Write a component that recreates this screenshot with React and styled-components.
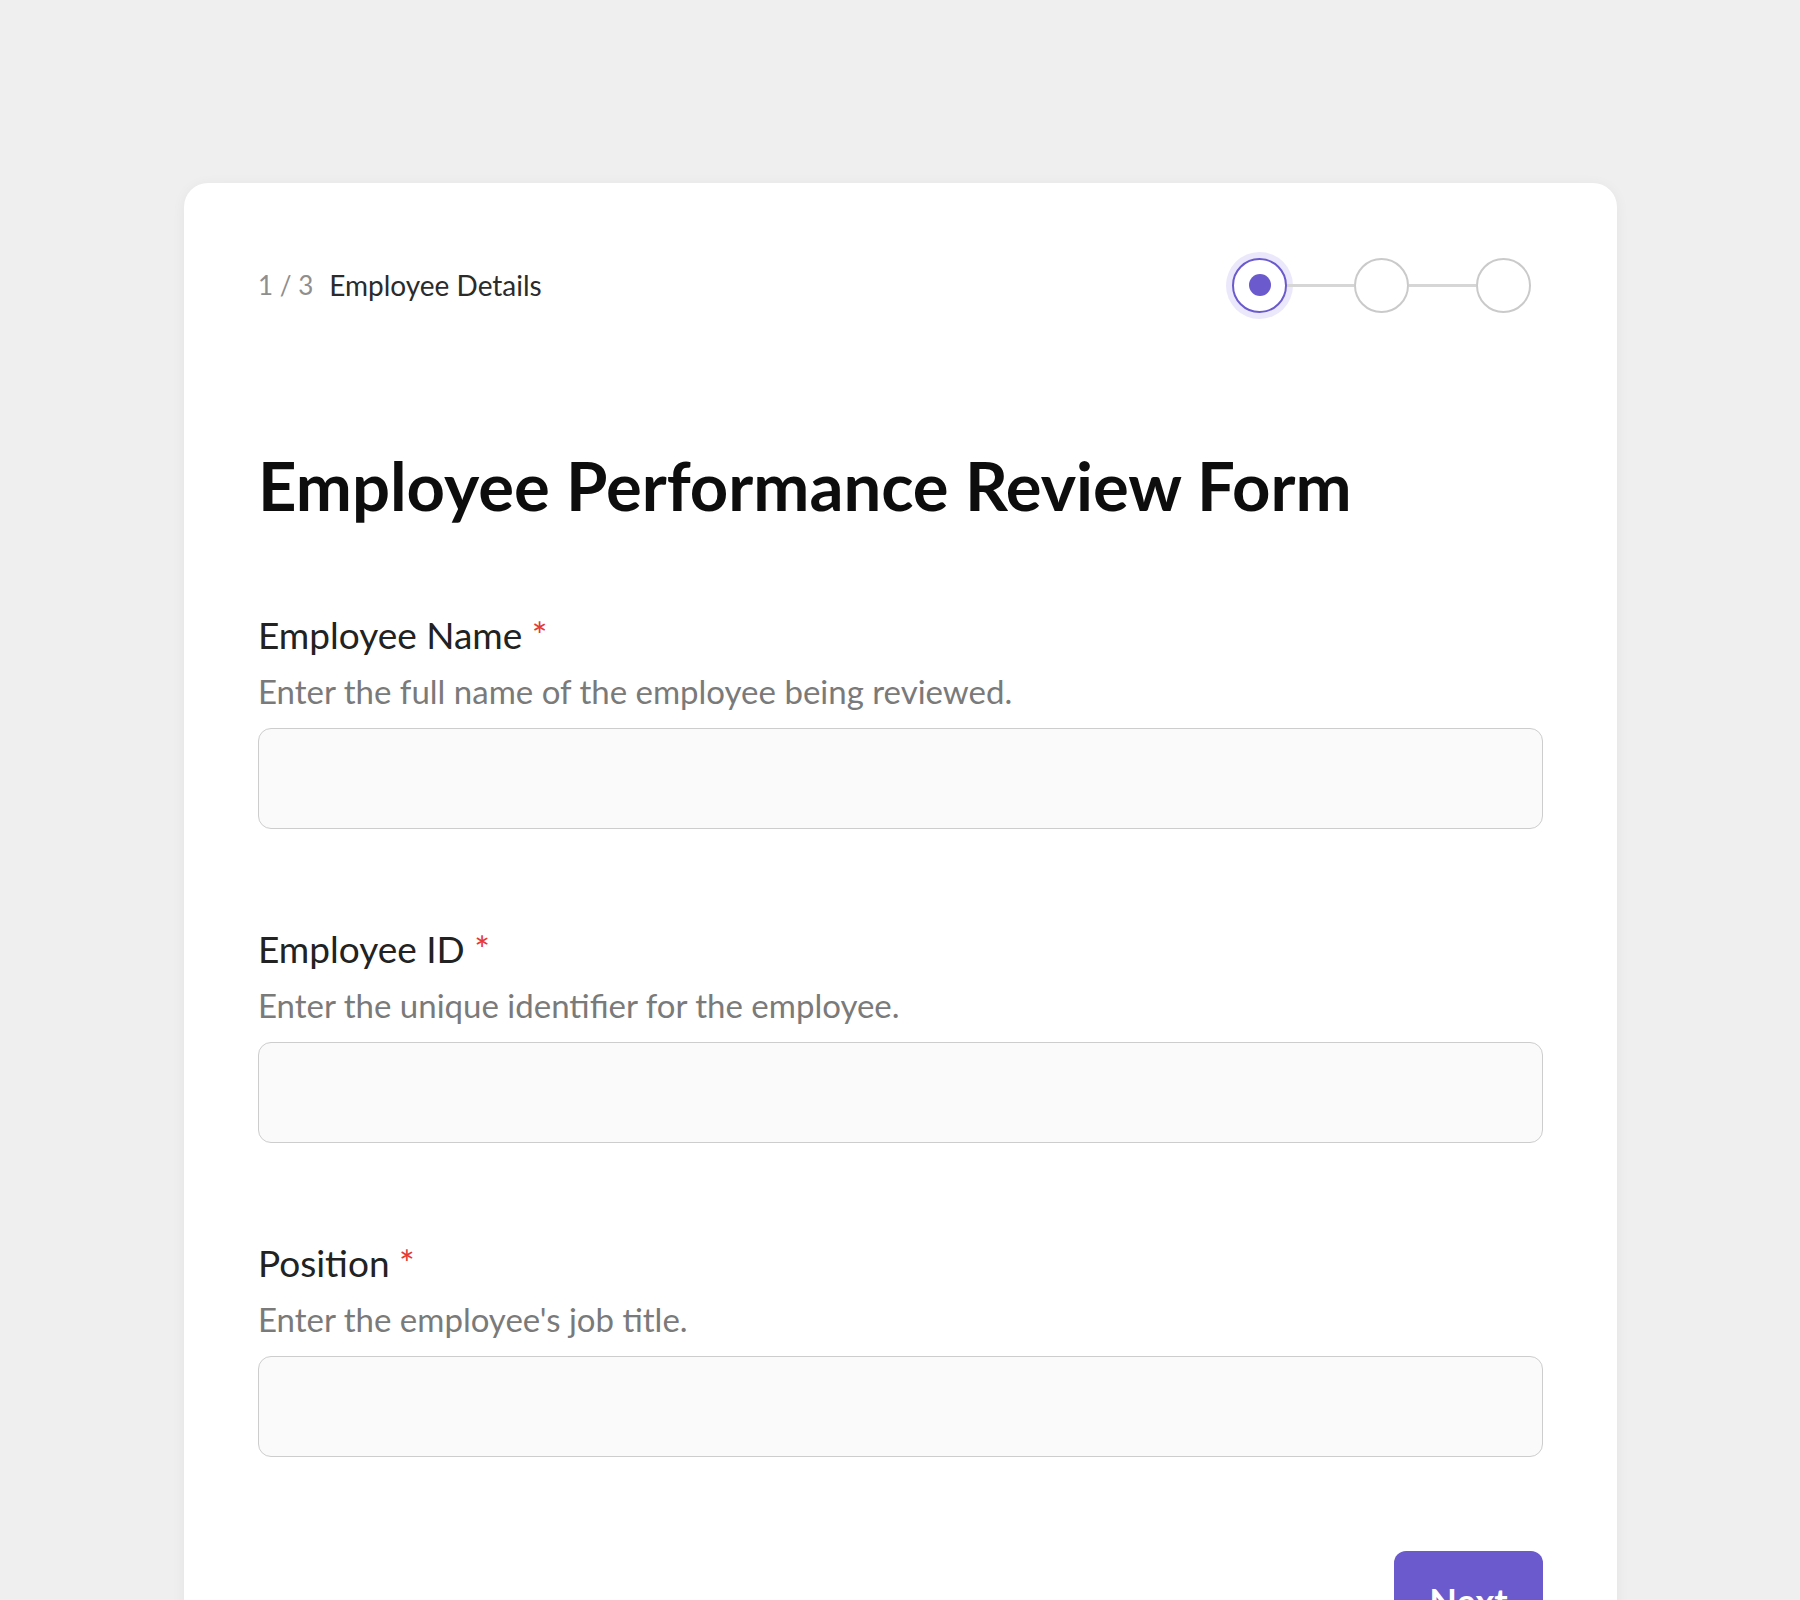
import styled, { createGlobalStyle } from 'styled-components';

const GlobalStyle = createGlobalStyle`
  body {
    margin: 0;
    background: #efefef;
    font-family: Lato, "Open Sans", sans-serif;
  }
`;

const fields = [
  { label: 'Employee Name', help: 'Enter the full name of the employee being reviewed.' },
  { label: 'Employee ID', help: 'Enter the unique identifier for the employee.' },
  { label: 'Position', help: "Enter the employee's job title." },
];

function Stepper({ current, total }) {
  const steps = [];
  for (let i = 0; i < total; i++) {
    if (i > 0) steps.push(<Connector key={'c' + i} $done={i <= current} />);
    steps.push(
      <StepDot key={'s' + i} $active={i === current}>
        {i === current && <InnerDot />}
      </StepDot>
    );
  }
  return <StepRow>{steps}</StepRow>;
}

function App() {
  return (
    <Page>
      <GlobalStyle />
      <Card>
        <Header>
          <StepText>
            <Counter>1 / 3</Counter>
            <StepName>Employee Details</StepName>
          </StepText>
          <Stepper current={0} total={3} />
        </Header>
        <Title>Employee Performance Review Form</Title>
        {fields.map((f) => (
          <Field key={f.label}>
            <Label>
              {f.label} <Required>*</Required>
            </Label>
            <Help>{f.help}</Help>
            <Input type="text" />
          </Field>
        ))}
        <Footer>
          <NextButton>Next</NextButton>
        </Footer>
      </Card>
    </Page>
  );
}

const Page = styled.div`
  padding: 183px 183px 80px 184px;
`;
const Card = styled.div`
  background: #fff;
  border-radius: 24px;
  box-shadow: 0 2px 14px rgba(0, 0, 0, 0.05);
  padding: 68px 74px 80px 74px;
`;
const Header = styled.div`
  display: flex;
  justify-content: space-between;
  align-items: center;
  height: 68px;
`;
const StepText = styled.div`
  display: flex;
  align-items: center;
  gap: 16px;
  font-size: 28px;
`;
const Counter = styled.span`
  color: #8e8e8e;
  font-size: 26px;
`;
const StepName = styled.span`
  color: #2b2b2b;
`;
const StepRow = styled.div`
  display: flex;
  align-items: center;
  padding-right: 12px;
`;
const StepDot = styled.div`
  width: 55px;
  height: 55px;
  box-sizing: border-box;
  border-radius: 50%;
  border: 2px solid ${(p) => (p.$active ? '#6a5acd' : '#cacaca')};
  box-shadow: ${(p) => (p.$active ? '0 0 0 6px #ebe8fb' : 'none')};
  display: flex;
  align-items: center;
  justify-content: center;
  background: #fff;
`;
const InnerDot = styled.div`
  width: 22px;
  height: 22px;
  border-radius: 50%;
  background: #6a5acd;
`;
const Connector = styled.div`
  width: 67px;
  height: 3px;
  background: ${(p) => (p.$done ? '#8e84da' : '#d6d6d6')};
`;
const Title = styled.h1`
  margin: 124px 0 87px;
  font-size: 67px;
  line-height: 84px;
  font-weight: 700;
  color: #0d0d0d;
`;
const Field = styled.div`
  display: flex;
  flex-direction: column;
  margin-bottom: 99px;
`;
const Label = styled.label`
  font-size: 37px;
  line-height: 42px;
  color: #222;
`;
const Required = styled.span`
  color: #e53935;
`;
const Help = styled.div`
  margin-top: 15px;
  font-size: 33px;
  line-height: 40px;
  color: #7a7a7a;
`;
const Input = styled.input`
  margin-top: 17px;
  height: 101px;
  box-sizing: border-box;
  border: 1.5px solid #cdcdcd;
  border-radius: 13px;
  background: #fafafa;
  font: inherit;
  font-size: 30px;
  padding: 0 24px;
  outline: none;
`;
const Footer = styled.div`
  display: flex;
  justify-content: flex-end;
  margin-top: -5px;
`;
const NextButton = styled.button`
  width: 149px;
  height: 100px;
  border: none;
  border-radius: 12px;
  background: #6a5acd;
  color: #fff;
  font-family: inherit;
  font-size: 36px;
  font-weight: 700;
`;

export default App;
